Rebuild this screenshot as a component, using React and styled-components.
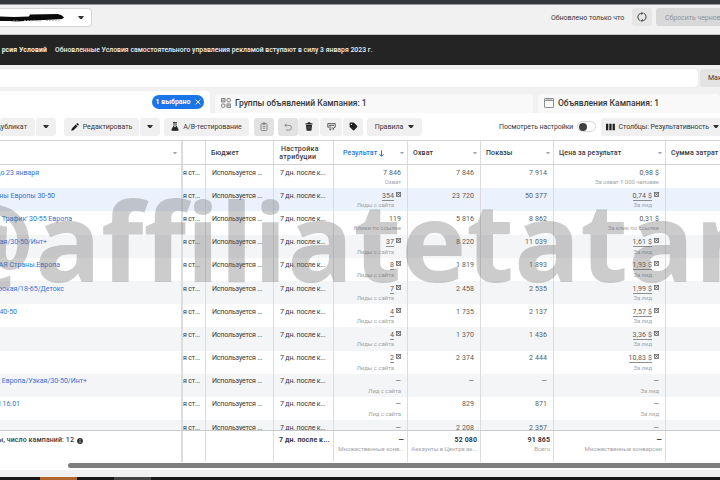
import React from 'react';
import styled, { createGlobalStyle } from 'styled-components';

const colors = {
  white: '#ffffff',
  page: '#f1f1f1',
  button: '#f0f0f0',
  buttonDim: '#e2e2e2',
  line: '#dcdcdc',
  text: '#595b5e',
  dark: '#36383b',
  muted: '#a3a5a8',
  blue: '#1b74e8',
  link: '#2f74d8',
};

const GlobalStyle = createGlobalStyle`
  * { box-sizing: border-box; }
  body {
    margin: 0;
    background: ${colors.page};
    font-family: Roboto, "Liberation Sans", sans-serif;
    font-size: 7px;
    color: ${colors.dark};
  }
`;

const Screen = styled.div`
  position: relative;
  width: 720px;
  height: 480px;
  overflow: hidden;
  display: flex;
  flex-direction: column;
  background: ${colors.page};
  white-space: nowrap;

  svg {
    flex: none;
  }
`;

const BrowserEdge = styled.div`
  height: 5px;
  flex: none;
  background: #34383d;
  border-bottom: 1px solid #96999c;
`;

const AccountBar = styled.header`
  height: 30px;
  flex: none;
  display: flex;
  align-items: flex-start;
  padding-top: 3px;
  border-bottom: 1px solid #bfc1c2;
`;

const AccountSelect = styled.div`
  width: 92px;
  height: 19px;
  display: flex;
  align-items: center;
  justify-content: space-between;
  padding-right: 7px;
  background: ${colors.white};
  border: 1px solid #d3d5d7;
  border-left: 0;
  border-radius: 0 4px 4px 0;
`;

const Updated = styled.span`
  margin-left: auto;
  width: 81px;
  line-height: 20px;
  font-size: 7px;
  letter-spacing: -0.02px;
`;

const RefreshButton = styled.div`
  width: 20px;
  height: 18px;
  display: flex;
  align-items: center;
  justify-content: center;
  border-radius: 3px;
  background: #e6e6e6;
`;

const ResetButton = styled.div`
  margin-left: 4px;
  width: 64px;
  height: 18px;
  padding-left: 9px;
  overflow: hidden;
  line-height: 20px;
  font-size: 7px;
  letter-spacing: -0.05px;
  color: #929292;
  border-radius: 3px 0 0 3px;
  background: #d8d8d8;
`;

const Notice = styled.div`
  height: 30px;
  flex: none;
  display: flex;
  align-items: center;
  background: #242424;
  color: #f2f2f2;
  font-size: 6.8px;
  font-weight: 500;
  letter-spacing: 0.035px;
`;

const NoticeTitle = styled.b`
  width: 47px;
  display: flex;
  justify-content: flex-end;
  overflow: hidden;
  margin-right: 8px;
  font-weight: 700;
  letter-spacing: 0.15px;
`;

const SearchRow = styled.div`
  height: 26px;
  flex: none;
  display: flex;
  padding-top: 4px;
`;

const SearchField = styled.div`
  width: 698px;
  height: 18px;
  background: ${colors.white};
  border-radius: 0 4px 4px 0;
  box-shadow: 0 0 1px #cccccc;
`;

const SearchButton = styled.div`
  margin-left: 2px;
  width: 20px;
  height: 18px;
  padding-left: 8px;
  line-height: 18px;
  font-size: 7px;
  overflow: hidden;
  border-radius: 3px 0 0 3px;
  background: #e4e4e4;
`;

const Tabs = styled.nav`
  height: 22px;
  flex: none;
  display: flex;
  align-items: flex-end;
`;

const Tab = styled.div`
  width: ${(props) => props.$width}px;
  height: ${(props) => (props.$active ? 22 : 19)}px;
  margin-right: 5px;
  flex: none;
  display: flex;
  align-items: center;
  justify-content: ${(props) => (props.$active ? 'flex-end' : 'flex-start')};
  gap: 4px;
  padding: ${(props) => (props.$active ? '0 6px 0 0' : '0 0 1px 6px')};
  font-size: 8.5px;
  font-weight: 500;
  background: ${(props) => (props.$active ? colors.white : '#f9f9f9')};
  border-radius: ${(props) => (props.$active ? '0 4px 0 0' : '4px 4px 0 0')};
`;

const SelectedPill = styled.div`
  width: 52px;
  height: 14px;
  display: flex;
  align-items: center;
  justify-content: center;
  gap: 4px;
  border-radius: 7px;
  background: ${colors.blue};
  color: ${colors.white};
  font-size: 7px;
  font-weight: 700;
`;

const Toolbar = styled.div`
  height: 27px;
  flex: none;
  display: flex;
  align-items: center;
  background: ${colors.white};
`;

const ToolButton = styled.div`
  width: ${(props) => props.$width}px;
  height: 18px;
  flex: none;
  margin-left: ${(props) => props.$gap || 0}px;
  padding: ${(props) => props.$pad || 0};
  display: flex;
  align-items: center;
  justify-content: ${(props) => props.$justify || 'center'};
  gap: ${(props) => props.$inner || 4}px;
  overflow: hidden;
  border-radius: 3px;
  background: ${(props) => (props.$dim ? colors.buttonDim : colors.button)};
  font-size: 7px;
  letter-spacing: ${(props) => props.$spacing || 0}px;
`;

const ToggleLabel = styled.span`
  margin-left: 77px;
  width: 78px;
  flex: none;
  font-size: 7px;
  letter-spacing: -0.1px;
`;

const Toggle = styled.div`
  width: 19px;
  height: 11px;
  flex: none;
  border-radius: 6px;
  border: 1px solid #d5d5d5;
  background: ${colors.white};

  &::before {
    content: "";
    display: block;
    width: 8px;
    height: 8px;
    margin: 0.5px 0 0 1px;
    border-radius: 50%;
    background: #404040;
  }
`;

const Table = styled.div`
  height: 322px;
  flex: none;
  display: flex;
  flex-direction: column;
  border-top: 1px solid #d5d5d5;
  background: ${colors.white};
`;

const Rows = styled.div`
  height: 265px;
  overflow: hidden;
`;

const Row = styled.div`
  display: grid;
  grid-template-columns: 183px 23px 68px 60px 74px 73px 73px 112px 54px;
  height: ${(props) => props.$height || 23.2}px;
  background: ${(props) => props.$background || colors.white};
`;

const HeadRow = styled(Row)`
  border-bottom: 1px solid #cfd1d3;
`;

const FootRow = styled(Row)`
  border-top: 1px solid #c9cbcd;
`;

const Cell = styled.div`
  display: flex;
  flex-direction: column;
  align-items: ${(props) => (props.$left ? 'flex-start' : 'flex-end')};
  padding: ${(props) => props.$pad || '3.6px 6px 0 0'};
  overflow: hidden;
  border-right: 1px solid ${colors.line};
  font-size: 7px;
  line-height: 9px;
  letter-spacing: ${(props) => (props.$left && !props.$bold ? -0.16 : 0.1)}px;
  color: ${(props) => (props.$left || props.$bold ? colors.dark : colors.text)};
  font-weight: ${(props) => (props.$bold ? 700 : 400)};

  &:first-child {
    border-right: 2px solid #dddddd;
  }

  &:last-child {
    border-right: 0;
  }
`;

const HeadCell = styled.div`
  display: flex;
  align-items: center;
  justify-content: space-between;
  padding: 1px 3px 0 ${(props) => props.$left || 5}px;
  border-right: 1px solid ${colors.line};
  font-weight: 500;
  font-size: 7px;
  line-height: 8px;
  letter-spacing: ${(props) => props.$spacing || 0.12}px;
  color: ${(props) => (props.$sorted ? colors.blue : colors.dark)};

  &:first-child {
    padding-right: 4px;
    border-right: 2px solid #dddddd;
  }

  &:last-child {
    border-right: 0;
  }
`;

const HeadText = styled.span`
  display: flex;
  align-items: center;
  gap: 2px;
  white-space: pre;
  text-align: center;
`;

const Name = styled.div`
  width: ${(props) => props.$end}px;
  display: flex;
  justify-content: flex-end;
  overflow: hidden;
  letter-spacing: -0.02px;
  color: ${colors.link};
`;

const Value = styled.div`
  display: flex;
  align-items: flex-start;
  gap: 2px;

  u {
    text-decoration: none;
    line-height: 8px;
    border-bottom: 1px solid #8c8e90;
  }
`;

const Sub = styled.div`
  margin-top: -0.6px;
  margin-right: ${(props) => (props.$inset ? 7 : 0)}px;
  font-size: 6px;
  font-weight: 400;
  letter-spacing: -0.06px;
  color: ${colors.muted};
`;

const Total = styled.div`
  width: 83px;
  display: flex;
  align-items: center;
  justify-content: flex-end;
  gap: 3px;
  font-weight: 500;
  letter-spacing: 0.1px;
`;

const ScrollTrack = styled.div`
  height: 8px;
  flex: none;
  padding: 1px 0 0 68px;
  background: ${colors.white};
`;

const ScrollThumb = styled.div`
  height: 5px;
  border-radius: 3px 0 0 3px;
  background: #7e7e7e;
`;

const Taskbar = styled.div`
  height: 3px;
  margin-top: 7px;
  flex: none;
  display: flex;
  gap: 37px;
  padding-left: 40px;
  background: #191919;
`;

const TaskItem = styled.div`
  width: 37px;
  background: ${(props) => props.$color};
`;

const Watermark = styled.div`
  position: absolute;
  right: -70px;
  left: -64px;
  top: 164px;
  font-family: "Open Sans", "Noto Sans", sans-serif;
  font-size: 110px;
  line-height: 150px;
  font-weight: 700;
  color: rgba(105, 105, 105, 0.34);
  pointer-events: none;
`;

const Caret = ({ size = 6, color = '#333333' }) => (
  <svg width={size} height={size * 0.65} viewBox="0 0 10 6.5">
    <path d="M1 0h8q1 0 .5 1L6 5.5q-1 1-2 0L.5 1Q0 0 1 0z" fill={color} />
  </svg>
);

const Scribble = () => (
  <svg width="66" height="11" viewBox="0 0 66 11">
    <path d="M0 4.5l14 .5 15-.5 1-2 28-.5 4 1.5 2 2-2 1.5-8 .5-20 1-18 1-6-.5L0 9z" fill="#0b0b0b" />
    <path d="M13 9h6M24 8.5l18 .5M46 8.5l12 .2 3-1" stroke="#aaa" strokeWidth=".8" strokeDasharray="2 1" fill="none" />
  </svg>
);

const Refresh = () => (
  <svg width="10" height="10" viewBox="0 0 10 10" fill="none" stroke="#444" strokeWidth="1">
    <path d="M3.4 8.8A4 4 0 0 1 2 2.3Q3 1.2 5.6 1.3M6.6 1.2A4 4 0 0 1 8 7.7Q7 8.8 4.4 8.7" />
    <path d="M4.4.1L5.8 1.3 4.4 2.6M5.6 7.4L4.2 8.7l1.4 1.2" />
  </svg>
);

const Close = () => (
  <svg width="6" height="6" viewBox="0 0 6 6" stroke="#fff" strokeWidth=".9">
    <path d="M.6.6l4.8 4.8M5.4.6L.6 5.4" />
  </svg>
);

const GroupIcon = () => (
  <svg width="10" height="10" viewBox="0 0 10 10" fill="none" stroke="#6c6c6c" strokeWidth=".9">
    <rect x=".6" y=".6" width="3.3" height="3.3" />
    <rect x="6" y=".6" width="3.3" height="3.3" rx="1" />
    <rect x=".6" y="6" width="3.3" height="3.3" rx="1" />
    <rect x="6" y="6" width="3.3" height="3.3" />
    <path d="M1.5 2.2h1.6M6.8 7.7h1.6" />
  </svg>
);

const AdIcon = () => (
  <svg width="10" height="10" viewBox="0 0 10 10" fill="none" stroke="#777" strokeWidth=".8">
    <rect x=".5" y=".5" width="9" height="9" rx=".5" />
    <path d="M.5 2.6h9M3 .5v2M5 .5v2M7 .5v2" />
  </svg>
);

const Pencil = () => (
  <svg width="8" height="8" viewBox="0 0 8 8" fill="#222">
    <path d="M.3 7.7l.5-2.3L4.7 1.5l1.8 1.8-3.9 3.9zM5.2 1l.7-.7q.4-.3.8 0l1 1q.3.4 0 .8L7 2.8z" />
  </svg>
);

const Flask = () => (
  <svg width="8" height="9" viewBox="0 0 8 9">
    <path d="M2.2.6h3.6M3 .6v3L.8 7.6q-.3.8.6.8h5.2q.9 0 .6-.8L5 3.6v-3" fill="none" stroke="#222" strokeWidth=".9" />
    <path d="M2.4 4.8h3.2l1.6 3.4H.8z" fill="#222" />
  </svg>
);

const Clipboard = () => (
  <svg width="8" height="9" viewBox="0 0 8 9" fill="none" stroke="#858585" strokeWidth=".9">
    <rect x="1" y="1.5" width="6" height="7" rx="1" />
    <path d="M2.7 1.3q1.3-1.6 2.6 0v1H2.7zM2.6 4.4h2.8M2.6 6.2h2.8" />
  </svg>
);

const Undo = () => (
  <svg width="8" height="8" viewBox="0 0 8 8" fill="none" stroke="#858585" strokeWidth=".9">
    <path d="M2.5.7L.8 2.3l1.7 1.6M.8 2.3H5a2.4 2.4 0 0 1 0 4.8H2" />
  </svg>
);

const Trash = () => (
  <svg width="8" height="9" viewBox="0 0 8 9" fill="#222">
    <path d="M.5 1.3h2L3 .3h2l.5 1h2v1.2h-7zM1 3h6l-.5 5q-.1.7-.8.7H2.3q-.7 0-.8-.7z" />
    <path d="M3 4v3.5M4 4v3.5M5 4v3.5" stroke="#888" strokeWidth=".4" />
  </svg>
);

const Share = () => (
  <svg width="9" height="8" viewBox="0 0 9 8" fill="none" stroke="#333" strokeWidth=".8">
    <path d="M2 4.2H.8V.6h7.4v3.6H7.6M2 2.4h5M3 3.2v4l1.5-1.3M4.9 4.2l1.3 1.3 1.6-1.3M6.2 5.2v2" />
  </svg>
);

const Tag = () => (
  <svg width="9" height="9" viewBox="0 0 9 9">
    <path d="M.6 1.5q0-.9.9-.9h2.8q.5 0 .9.4l3 3q.5.6 0 1.1L5.2 8.2q-.6.5-1.1 0l-3.1-3q-.4-.4-.4-.9z" fill="#222" />
    <circle cx="2.4" cy="2.4" r=".6" fill="#eee" />
  </svg>
);

const ColumnsIcon = () => (
  <svg width="9" height="8" viewBox="0 0 9 8" fill="#222">
    <path d="M0 .8h2.3v6.4H0zM3.3.8h2.3v6.4H3.3zM6.6.8h2.3v6.4H6.6z" />
  </svg>
);

const Footnote = () => (
  <svg width="5" height="5" viewBox="0 0 5 5" fill="none" stroke="#444" strokeWidth=".7">
    <path d="M.4 0v5M4.6 0v5M1 .8l3 3M4 .8l-3 3M1 4.6h3M.4.4h4.2" />
  </svg>
);

const SortArrow = () => (
  <svg width="5" height="7" viewBox="0 0 5 7" fill="none" stroke={colors.blue} strokeWidth="1">
    <path d="M2.5.3v6M.5 4.3l2 2 2-2" />
  </svg>
);

const InfoIcon = () => (
  <svg width="6" height="6" viewBox="0 0 6 6">
    <circle cx="3" cy="3" r="2.9" fill="#2b2d30" />
    <path d="M3 1.2v.8M3 2.6v2.2" stroke="#fff" strokeWidth=".8" />
  </svg>
);

const lead = 'Лиды с сайта';
const perLead = 'За лид';

const rows = [
  { name: 'до 23 января', end: 39, result: '7 846', resultSub: 'Охват', reach: '7 846', views: '7 914', price: '0,98 $', priceSub: 'За охват 1 000 человек' },
  { name: 'ны Европы 30-50', end: 55, note: true, result: '354', resultSub: lead, reach: '23 720', views: '50 377', price: '0,74 $', priceSub: perLead, background: '#ebf2fd' },
  { name: "Трафик' 30-55 Европа", end: 72, result: '119', resultSub: 'Клики по ссылке', reach: '5 816', views: '8 862', price: '0,31 $', priceSub: 'За клик по ссылке' },
  { name: 'ая/30-50/Инт+', end: 47, note: true, result: '37', resultSub: lead, reach: '8 220', views: '11 039', price: '1,61 $', priceSub: perLead },
  { name: 'АЯ Страны.Европа', end: 60, note: true, result: '8', resultSub: lead, reach: '1 819', views: '1 893', price: '1,93 $', priceSub: perLead },
  { name: 'рокая/18-65/Детокс', end: 64, note: true, result: '7', resultSub: lead, reach: '2 458', views: '2 535', price: '1,99 $', priceSub: perLead },
  { name: '40-50', end: 17, note: true, result: '4', resultSub: lead, reach: '1 735', views: '2 137', price: '7,57 $', priceSub: perLead },
  { name: '', end: 0, note: true, result: '4', resultSub: lead, reach: '1 370', views: '1 436', price: '3,36 $', priceSub: perLead },
  { name: '', end: 0, note: true, result: '2', resultSub: lead, reach: '2 374', views: '2 444', price: '10,83 $', priceSub: perLead },
  { name: 'я Европа/Узкая/30-50/Инт+', end: 87, result: '—', resultSub: 'Лид с сайта', reach: '—', views: '—', price: '—', priceSub: perLead },
  { name: 'Я 16.01', end: 20, result: '—', resultSub: 'Лид с сайта', reach: '829', views: '871', price: '—', priceSub: perLead },
  { name: '', end: 0, result: '—', resultSub: '', reach: '2 208', views: '2 357', price: '—', priceSub: '' },
];

function Metric({ value, sub, note }) {
  return (
    <Cell>
      <Value>
        {note ? <u>{value}</u> : value}
        {note && <Footnote />}
      </Value>
      {sub && <Sub $inset={note}>{sub}</Sub>}
    </Cell>
  );
}

function CampaignRow({ row, index }) {
  const background = row.background || (index % 2 === 1 ? '#f4f5f7' : colors.white);
  return (
    <Row $background={background}>
      <Cell $left $pad="3.6px 0 0">
        <Name $end={row.end}>{row.name}</Name>
      </Cell>
      <Cell $left $pad="3.6px 0 0">я ст...</Cell>
      <Cell $left $pad="3.6px 0 0 6px">Используется ...</Cell>
      <Cell $left $pad="3.6px 0 0 6px">7 дн. после к...</Cell>
      <Metric value={row.result} sub={row.resultSub} note={row.note} />
      <Metric value={row.reach} />
      <Metric value={row.views} />
      <Metric value={row.price} sub={row.priceSub} note={row.note} />
      <Cell />
    </Row>
  );
}

function Head({ title, left, spacing, sorted, caret = true }) {
  return (
    <HeadCell $left={left} $sorted={sorted} $spacing={spacing}>
      <HeadText>
        {title}
        {sorted && <SortArrow />}
      </HeadText>
      {caret && <Caret size={4} color="#a6aab0" />}
    </HeadCell>
  );
}

export default function App() {
  return (
    <>
      <GlobalStyle />
      <Screen>
        <BrowserEdge />
        <AccountBar>
          <AccountSelect>
            <Scribble />
            <Caret />
          </AccountSelect>
          <Updated>Обновлено только что</Updated>
          <RefreshButton>
            <Refresh />
          </RefreshButton>
          <ResetButton>Сбросить черновики</ResetButton>
        </AccountBar>
        <Notice>
          <NoticeTitle>рсия Условий</NoticeTitle>
          <span>Обновленные Условия самостоятельного управления рекламой вступают в силу 3 января 2023 г.</span>
        </Notice>
        <SearchRow>
          <SearchField />
          <SearchButton>Макс</SearchButton>
        </SearchRow>
        <Tabs>
          <Tab $active $width={210}>
            <SelectedPill>
              1 выбрано <Close />
            </SelectedPill>
          </Tab>
          <Tab $width={318}>
            <GroupIcon />
            Группы объявлений Кампания: 1
          </Tab>
          <Tab $width={182}>
            <AdIcon />
            Объявления Кампания: 1
          </Tab>
        </Tabs>
        <Toolbar>
          <ToolButton $width={35} $justify="flex-end" $pad="0 8px 0 0">дубликат</ToolButton>
          <ToolButton $width={20} $gap={1}><Caret /></ToolButton>
          <ToolButton $width={75} $gap={8} $spacing={-0.05}><Pencil />Редактировать</ToolButton>
          <ToolButton $width={20} $gap={1}><Caret /></ToolButton>
          <ToolButton $width={85} $gap={4} $spacing={-0.05}><Flask />A/B-тестирование</ToolButton>
          <ToolButton $width={20} $gap={5} $dim><Clipboard /></ToolButton>
          <ToolButton $width={20} $gap={4} $dim><Undo /></ToolButton>
          <ToolButton $width={21}><Trash /></ToolButton>
          <ToolButton $width={22} $gap={1}><Share /></ToolButton>
          <ToolButton $width={20} $gap={1}><Tag /></ToolButton>
          <ToolButton $width={55} $gap={4} $inner={5}>Правила <Caret /></ToolButton>
          <ToggleLabel>Посмотреть настройки</ToggleLabel>
          <Toggle />
          <ToolButton $width={126} $gap={5} $inner={3.5} $justify="flex-start" $pad="0 0 0 5px" $spacing={-0.07}>
            <ColumnsIcon />
            Столбцы: Результативность
            <Caret />
          </ToolButton>
        </Toolbar>
        <Table>
          <HeadRow $height={24}>
            <Head title="" />
            <Head title="" caret={false} />
            <Head title="Бюджет" caret={false} />
            <Head title={' Настройка\nатрибуции '} left={5} spacing={0.25} caret={false} />
            <Head title="Результат" left={9} sorted />
            <Head title="Охват" />
            <Head title="Показы" />
            <Head title="Цена за результат" />
            <Head title="Сумма затрат" caret={false} />
          </HeadRow>
          <Rows>
            {rows.map((row, index) => (
              <CampaignRow key={index} row={row} index={index} />
            ))}
          </Rows>
          <FootRow $height={32}>
            <Cell $left $pad="5px 0 0">
              <Total>ы, число кампаний: 12 <InfoIcon /></Total>
            </Cell>
            <Cell />
            <Cell />
            <Cell $left $bold $pad="5px 0 0 5px">7 дн. после к...</Cell>
            <Cell $bold $pad="5px 3px 0 0">—<Sub>Множественные конв...</Sub></Cell>
            <Cell $bold $pad="5px 3px 0 0">52 080<Sub>Аккаунты в Центре ак...</Sub></Cell>
            <Cell $bold $pad="5px 3px 0 0">91 865<Sub>Всего</Sub></Cell>
            <Cell $bold $pad="5px 3px 0 0">—<Sub>Множественные конверсии</Sub></Cell>
            <Cell />
          </FootRow>
        </Table>
        <ScrollTrack>
          <ScrollThumb />
        </ScrollTrack>
        <Taskbar>
          <TaskItem $color="#b0652c" />
          <TaskItem $color="#444444" />
        </Taskbar>
        <Watermark>@affiliatetatar</Watermark>
      </Screen>
    </>
  );
}
